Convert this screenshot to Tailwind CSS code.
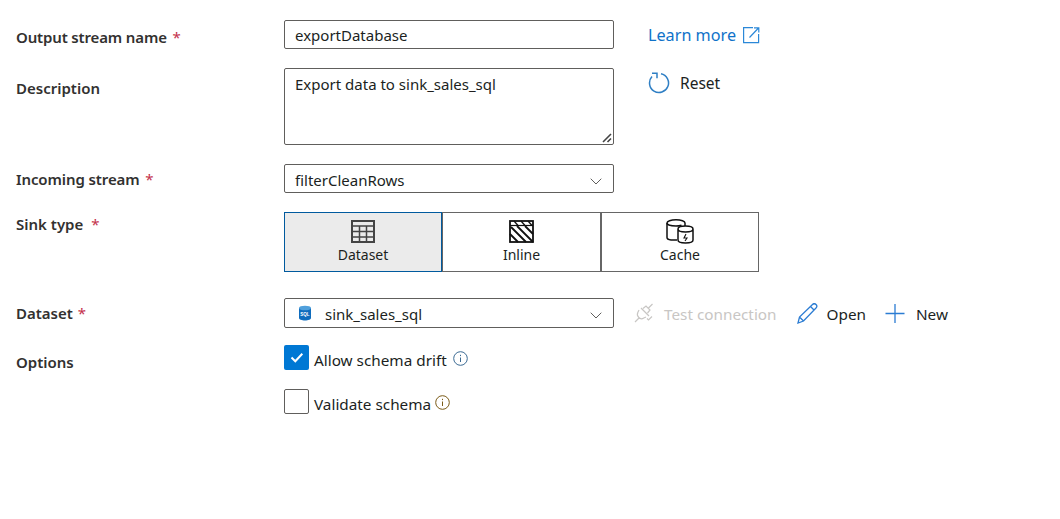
<!DOCTYPE html>
<html lang="en">
<head>
    <meta charset="UTF-8">
    <title>Sink settings</title>
    <script src="https://cdn.jsdelivr.net/npm/@tailwindcss/browser@4"></script>
</head>
<body class="bg-white font-['Noto_Sans',sans-serif] text-[15px] text-[#201f1e] h-[519px] overflow-hidden">
    <main class="pt-[20px] pl-[16px]">
        <!-- Output stream name -->
        <div class="flex h-[29px]">
            <div class="w-[268px] pt-[5px] font-semibold text-[#323130] leading-[24px] tracking-[-0.15px]">Output stream name <span class="text-[#c4314b] font-normal ml-[2px]">*</span></div>
            <div class="w-[330px] h-[29px] border border-[#605e5c] rounded-[2px] pl-[10px] leading-[29px]">exportDatabase</div>
            <a class="ml-[34px] flex items-start text-[#0f72c9] text-[16.200px] leading-[31px]">Learn more
                <svg class="ml-[7px] mt-[7px]" width="17" height="17" viewBox="0 0 17 17" fill="none" stroke="#2b88d8" stroke-width="1.200"><path d="M10 .6H.6v15h15V7M6.500 10.500 15.500 1M11 .8h4.800v4.800"/></svg>
            </a>
        </div>
        <!-- Description -->
        <div class="flex mt-[19px] h-[77px]">
            <div class="w-[268px] pt-[8px] font-semibold text-[#323130] leading-[24px]">Description</div>
            <div class="relative w-[330px] h-[77px] border border-[#605e5c] rounded-[2px] pl-[10px] pt-[2px] leading-[27px]">Export data to sink_sales_sql
                <svg class="absolute right-[1px] bottom-[1px]" width="10" height="10" viewBox="0 0 10 10" stroke="#444" stroke-width="1.600"><path d="M1 9 9 1M5.500 9 9 5.500"/></svg>
            </div>
            <div class="ml-[34px] flex items-start h-[30px] leading-[30px]">
                <svg class="mt-[3px]" width="22" height="24" viewBox="0 0 22 24" fill="none" stroke="#2f7fc4" stroke-width="1.500"><path d="M13 2.700a9.500 9.500 0 1 1-9 2.900"/><path d="M4 2.200h5v5"/></svg>
                <span class="ml-[10px] text-[15.500px]">Reset</span>
            </div>
        </div>
        <!-- Incoming stream -->
        <div class="flex mt-[19px] h-[29px]">
            <div class="w-[268px] pt-[3px] font-semibold text-[#323130] leading-[24px] tracking-[-0.1px]">Incoming stream <span class="text-[#c4314b] font-normal ml-[2px]">*</span></div>
            <div class="flex items-center justify-between w-[330px] h-[29px] border border-[#605e5c] rounded-[2px] pl-[10px] pr-[11px]">
                <span class="mt-[4px]">filterCleanRows</span>
                <svg class="mt-[5px]" width="12" height="7" viewBox="0 0 12 7" fill="none" stroke="#605e5c" stroke-width="1"><path d="m.7.700 5.300 5.300 5.300-5.300"/></svg>
            </div>
        </div>
        <!-- Sink type -->
        <div class="flex mt-[19px] h-[60px]">
            <div class="w-[268px] font-semibold text-[#323130] leading-[24px]">Sink type <span class="text-[#c4314b] font-normal ml-[4px]">*</span></div>
            <div class="flex text-[14px] leading-[18px] text-[#201f1e]">
                <div class="flex flex-col items-center w-[158px] h-[60px] bg-[#ebebeb] border border-[#005a9e] pt-[7px]">
                    <svg width="24" height="23" viewBox="0 0 24 23" fill="none" stroke="#444" stroke-width="2"><rect x="1" y="1" width="22" height="21"/><path d="M1 6h22M1 11.500h22M1 17h22M8.500 6v16M15.500 6v16" stroke-width="1.500"/></svg>
                    <span class="mt-[3px]">Dataset</span>
                </div>
                <div class="flex flex-col items-center w-[159px] h-[60px] border border-[#666] pt-[7px]">
                    <svg width="25" height="23" viewBox="0 0 25 23" fill="none" stroke="#111" stroke-width="1.800"><rect x="1" y="1" width="23" height="21"/><path d="M1 5.500h23" stroke-width="1.200"/><path d="m5 1 4 4.500M12 1l4 4.500M19 1l4 4.500" stroke-width="1.300"/><path d="M2 7l15 15M8 6l16 16M16 6l8 8M1 14l8 8"/></svg>
                    <span class="mt-[3px]">Inline</span>
                </div>
                <div class="flex flex-col items-center w-[158px] h-[60px] border border-[#666] pt-[6px]">
                    <svg width="28" height="25" viewBox="0 0 28 25" fill="none" stroke="#111" stroke-width="1.500"><path d="M11 21H5c-2.500-.3-4-1.300-4-2.500V4c0-1.700 3.800-3.200 9-3.200S19 2.300 19 4v3"/><path d="M1 4c0 1.700 3.800 3 9 3 2.200 0 4-.3 5.500-.8"/><path d="M12 10v11c0 1.700 3.300 3 7.500 3s7.500-1.300 7.500-3V10c0-1.700-3.300-3-7.500-3S12 8.300 12 10Zm0 0c0 1.700 3.300 3 7.500 3s7.500-1.300 7.500-3"/><path d="m20 15-2 4h3l-2 3" stroke-width="1.100"/></svg>
                    <span class="mt-[2px]">Cache</span>
                </div>
            </div>
        </div>
        <!-- Dataset -->
        <div class="flex mt-[26px] h-[30px] items-start text-[15.300px]">
            <div class="w-[268px] pt-[3px] text-[15px] font-semibold text-[#323130] leading-[24px]">Dataset <span class="text-[#c4314b] font-normal ml-[1px]">*</span></div>
            <div class="flex items-center w-[330px] h-[30px] border border-[#605e5c] rounded-[2px] pl-[13px] pr-[11px] text-[15px]">
                <svg width="14" height="16" viewBox="0 0 14 16"><path d="M1 3v10c0 1.400 2.700 2.500 6 2.500s6-1.100 6-2.500V3Z" fill="#0f6cbd"/><ellipse cx="7" cy="3" rx="6" ry="2.300" fill="#50a0dc"/><text x="7" y="11" text-anchor="middle" font-size="4.500" font-family="Liberation Sans" fill="#fff" font-weight="700">SQL</text></svg>
                <span class="ml-[13px] flex-1 mt-[2px]">sink_sales_sql</span>
                <svg class="mt-[5px]" width="12" height="7" viewBox="0 0 12 7" fill="none" stroke="#605e5c" stroke-width="1"><path d="m.7.700 5.300 5.300 5.300-5.300"/></svg>
            </div>
            <div class="flex items-center h-[30px] ml-[20px] text-[#c8c6c4]">
                <svg width="20" height="20" viewBox="0 0 20 20" fill="none" stroke="#c8c6c4" stroke-width="1.200"><path d="M18.500 1 14 5.500M1 19l4.500-4.500M7 5l8 8M5 7 3.800 9.500c-1 2-.4 3.500 1 5s3 1.700 5 .5L12 14M9 5.500 12 3l4 4-2.500 3M13 15.500l1.500 1.500 3.500-3.500"/></svg>
                <span class="ml-[10px] mt-[2px]">Test connection</span>
            </div>
            <div class="flex items-center h-[30px] ml-[20px]">
                <svg width="21" height="21" viewBox="0 0 21 21" fill="none" stroke="#2b7cd3" stroke-width="1.300"><path d="M1 20l1.500-6L15.500 1.500c1-1 2.500-1 3.500 0s1 2.500 0 3.500L6.500 18ZM2.500 14 6.500 18M13.500 3.500l4 4"/></svg>
                <span class="ml-[9px] mt-[2px]">Open</span>
            </div>
            <div class="flex items-center h-[30px] ml-[19px]">
                <svg width="20" height="19" viewBox="0 0 20 19" stroke="#2b7cd3" stroke-width="1.300"><path d="M10 0v19M.5 9.500h19"/></svg>
                <span class="ml-[11px] mt-[2px]">New</span>
            </div>
        </div>
        <!-- Options -->
        <div class="flex mt-[16px] text-[15.300px]">
            <div class="w-[268px] pt-[6px] text-[15px] font-semibold text-[#323130] leading-[24px]">Options</div>
            <div class="flex flex-col">
                <div class="flex items-center h-[26px]">
                    <div class="flex items-center justify-center w-[25px] h-[25px] bg-[#0078d4] rounded-[2px]">
                        <svg width="14" height="11" viewBox="0 0 14 11" fill="none" stroke="#fff" stroke-width="2"><path d="m1.500 5.500 3.800 3.800 7-7.500"/></svg>
                    </div>
                    <span class="ml-[5px] mt-[6px]">Allow schema drift</span>
                    <svg class="ml-[6px] mt-[3px]" width="15" height="15" viewBox="0 0 15 15" fill="none" stroke="#3b6a93"><circle cx="7.500" cy="7.500" r="6.800"/><path d="M7.500 6.500v4.500M7.500 3.800v1.300"/></svg>
                </div>
                <div class="flex items-center h-[26px] mt-[18px]">
                    <div class="w-[25px] h-[25px] border border-[#605e5c] rounded-[2px]"></div>
                    <span class="ml-[5px] mt-[6px]">Validate schema</span>
                    <svg class="ml-[4px] mt-[2px]" width="15" height="15" viewBox="0 0 15 15" fill="none" stroke="#7a5b17"><circle cx="7.500" cy="7.500" r="6.800"/><path d="M7.500 6.500v4.500M7.500 3.800v1.300"/></svg>
                </div>
            </div>
        </div>
    </main>
</body>
</html>
